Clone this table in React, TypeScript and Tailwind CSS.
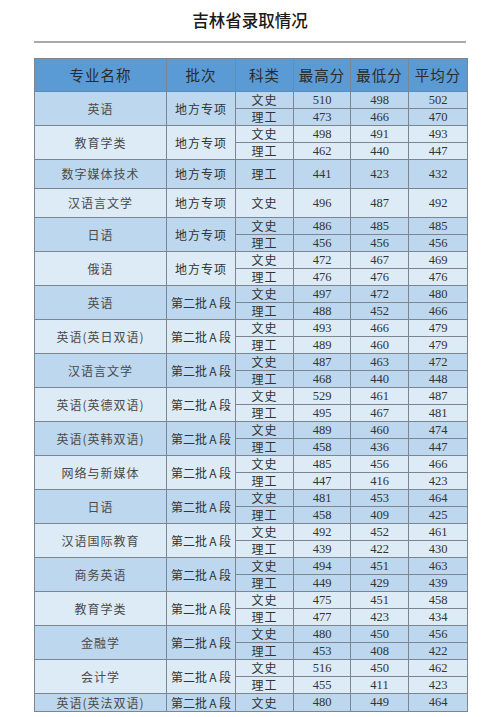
type Score = [string, number, number, number];

type Group = {
  name: string;
  batch: string;
  rows: Score[];
};

const A = '第二批\u2009A\u2009段';
const L = '地方专项';

const groups: Group[] = [
  { name: '英语', batch: L, rows: [['文史', 510, 498, 502], ['理工', 473, 466, 470]] },
  { name: '教育学类', batch: L, rows: [['文史', 498, 491, 493], ['理工', 462, 440, 447]] },
  { name: '数字媒体技术', batch: L, rows: [['理工', 441, 423, 432]] },
  { name: '汉语言文学', batch: L, rows: [['文史', 496, 487, 492]] },
  { name: '日语', batch: L, rows: [['文史', 486, 485, 485], ['理工', 456, 456, 456]] },
  { name: '俄语', batch: L, rows: [['文史', 472, 467, 469], ['理工', 476, 476, 476]] },
  { name: '英语', batch: A, rows: [['文史', 497, 472, 480], ['理工', 488, 452, 466]] },
  { name: '英语(英日双语)', batch: A, rows: [['文史', 493, 466, 479], ['理工', 489, 460, 479]] },
  { name: '汉语言文学', batch: A, rows: [['文史', 487, 463, 472], ['理工', 468, 440, 448]] },
  { name: '英语(英德双语)', batch: A, rows: [['文史', 529, 461, 487], ['理工', 495, 467, 481]] },
  { name: '英语(英韩双语)', batch: A, rows: [['文史', 489, 460, 474], ['理工', 458, 436, 447]] },
  { name: '网络与新媒体', batch: A, rows: [['文史', 485, 456, 466], ['理工', 447, 416, 423]] },
  { name: '日语', batch: A, rows: [['文史', 481, 453, 464], ['理工', 458, 409, 425]] },
  { name: '汉语国际教育', batch: A, rows: [['文史', 492, 452, 461], ['理工', 439, 422, 430]] },
  { name: '商务英语', batch: A, rows: [['文史', 494, 451, 463], ['理工', 449, 429, 439]] },
  { name: '教育学类', batch: A, rows: [['文史', 475, 451, 458], ['理工', 477, 423, 434]] },
  { name: '金融学', batch: A, rows: [['文史', 480, 450, 456], ['理工', 453, 408, 422]] },
  { name: '会计学', batch: A, rows: [['文史', 516, 450, 462], ['理工', 455, 411, 423]] },
  { name: '英语(英法双语)', batch: A, rows: [['文史', 480, 449, 464]] },
];

const headers = ['专业名称', '批次', '科类', '最高分', '最低分', '平均分'];
const cell = 'border border-[#7d8590] text-center p-0 leading-none';
const cjk = "font-['Noto_Sans_CJK_SC',sans-serif]";
const num = "font-['Liberation_Serif','Noto_Sans_CJK_SC',serif]";

export default function App() {
  return (
    <div className="w-[500px] h-[717px] bg-white overflow-hidden">
      <div className={`h-[41px] flex items-center justify-center text-[16.5px] font-medium text-[#1a1a1a] ${cjk}`}>
        吉林省录取情况
      </div>
      <div className="mx-[34px] h-[2px] bg-[#a9a9a9]" />
      <table className="mt-[15px] ml-[34px] w-[433px] table-fixed border-collapse text-[#333]">
        <colgroup>
          <col className="w-[132px]" />
          <col className="w-[69px]" />
          <col className="w-[58px]" />
          <col className="w-[57px]" />
          <col className="w-[58px]" />
          <col className="w-[59px]" />
        </colgroup>
        <thead>
          <tr className="bg-[#5b9bd5] h-[33px]">
            {headers.map((h) => (
              <th key={h} className={`${cell} ${cjk} font-normal text-[14.5px] tracking-[1px] text-[#2a2a2a]`}>
                {h}
              </th>
            ))}
          </tr>
        </thead>
        <tbody>
          {groups.map((g, gi) => {
            const bg = gi % 2 === 0 ? 'bg-[#bdd7ee]' : 'bg-[#ddebf7]';
            const single = g.rows.length === 1;
            const h = single ? (gi === groups.length - 1 ? 'h-[18px]' : 'h-[29px]') : 'h-[17px]';
            return g.rows.map((r, ri) => (
              <tr key={`${gi}-${ri}`} className={`${bg} ${h}`}>
                {ri === 0 && (
                  <>
                    <td rowSpan={g.rows.length} className={`${cell} ${cjk} text-[12px] tracking-[1px] text-[#4a4a4a]`}>
                      {g.name}
                    </td>
                    <td rowSpan={g.rows.length} className={`${cell} ${cjk} text-[12px] ${g.batch === L ? 'tracking-[1px]' : ''}`}>
                      {g.batch}
                    </td>
                  </>
                )}
                <td className={`${cell} ${cjk} text-[12px] tracking-[1px]`}>{r[0]}</td>
                <td className={`${cell} ${num} text-[12.5px]`}>{r[1]}</td>
                <td className={`${cell} ${num} text-[12.5px]`}>{r[2]}</td>
                <td className={`${cell} ${num} text-[12.5px]`}>{r[3]}</td>
              </tr>
            ));
          })}
        </tbody>
      </table>
    </div>
  );
}
